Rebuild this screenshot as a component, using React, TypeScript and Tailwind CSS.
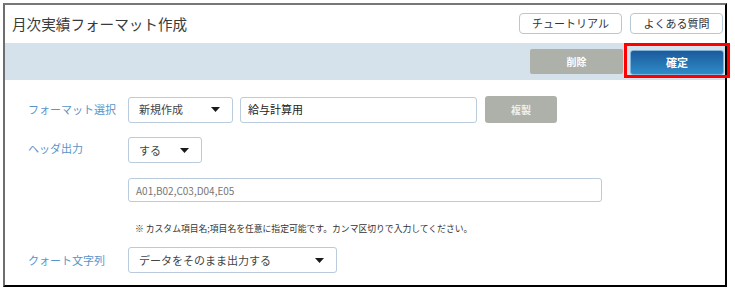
import React from "react";

const font = { fontFamily: '"Noto Sans CJK JP", "Noto Sans", sans-serif' };

function Caret() {
  return (
    <svg width="9" height="5" viewBox="0 0 9 5" className="shrink-0">
      <path d="M0 0 L9 0 L4.5 5 Z" fill="#1a1a1a" />
    </svg>
  );
}

function Select({ value, width }: { value: string; width: string }) {
  return (
    <div
      className={`flex h-[26px] items-center justify-between rounded-[3px] border border-[#b9cbdc] bg-white pl-[10px] pr-[12px] text-[11px] text-[#444] ${width}`}
    >
      <span>{value}</span>
      <Caret />
    </div>
  );
}

export default function App() {
  return (
    <div className="bg-white pl-[3px] pt-[3px]" style={font}>
      <div className="relative h-[284px] w-[724px] border-l-2 border-t-2 border-b-2 border-r-2 border-l-[#6e6e6e] border-t-[#777] border-r-black border-b-black">
        {/* Header */}
        <div className="flex h-[38px] items-center justify-between pl-[7px] pr-[2px]">
          <h1 className="text-[14.6px] text-[#3a3a3a]">月次実績フォーマット作成</h1>
          <div className="flex gap-[8px] pb-[2px]">
            <button className="h-[21px] w-[103px] rounded-[4px] border border-[#b7c7d6] bg-white text-[11px] text-[#333]">
              チュートリアル
            </button>
            <button className="h-[21px] w-[93px] rounded-[4px] border border-[#b7c7d6] bg-white text-[11px] text-[#333]">
              よくある質問
            </button>
          </div>
        </div>

        {/* Action band */}
        <div className="flex h-[37px] items-center justify-end gap-[7px] bg-[#d6e2eb] pr-[1px]">
          <button className="h-[25px] w-[93px] rounded-[2px] bg-[#adb1aa] text-[10px] font-bold text-white">
            削除
          </button>
          <div className="relative">
            <button className="h-[25px] w-[94px] rounded-[3px] border border-[#7fb3d9] bg-gradient-to-b from-[#1d5a9c] to-[#2e8cc6] text-[11px] font-bold text-white">
              確定
            </button>
            <div className="pointer-events-none absolute -left-[6px] -top-[5px] h-[35px] w-[106px] border-[3px] border-[#ff0000]" />
          </div>
        </div>

        {/* Form */}
        <div className="pl-[23px] pt-[16px] text-[11px]">
          <div className="flex items-center">
            <div className="w-[100px] text-[#5894c9]">フォーマット選択</div>
            <Select value="新規作成" width="w-[105px]" />
            <div className="ml-[7px] flex h-[26px] w-[237px] items-center rounded-[3px] border border-[#b9cbdc] px-[7px] text-[#222]">
              給与計算用
            </div>
            <button className="ml-[8px] h-[27px] w-[72px] rounded-[3px] bg-[#adb1aa] text-[10px] font-bold text-[#eef0ec]">
              複製
            </button>
          </div>

          <div className="mt-[14px] flex items-start">
            <div className="w-[100px] pt-[3px] text-[#5894c9]">ヘッダ出力</div>
            <Select value="する" width="w-[74px]" />
          </div>

          <div className="ml-[100px] mt-[15px] flex h-[24px] w-[474px] items-center rounded-[3px] border border-[#b9cbdc] px-[7px] text-[10px] text-[#777]">
            A01,B02,C03,D04,E05
          </div>

          <div className="ml-[107px] mt-[20px] text-[8.8px] text-[#333]">
            ※ カスタム項目名;項目名を任意に指定可能です。カンマ区切りで入力してください。
          </div>

          <div className="mt-[12px] flex items-center">
            <div className="w-[100px] text-[#5894c9]">クォート文字列</div>
            <Select value="データをそのまま出力する" width="w-[209px]" />
          </div>
        </div>
      </div>
    </div>
  );
}
